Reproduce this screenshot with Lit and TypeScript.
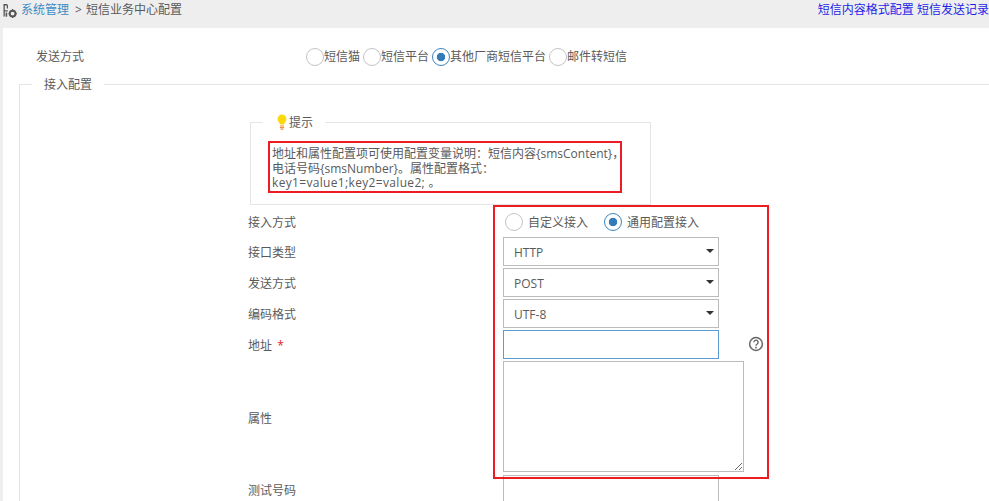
import { LitElement, html, css } from "lit";
import { customElement } from "lit/decorators.js";

@customElement("app-root")
export class AppRoot extends LitElement {
  static styles = css`
    :host {
      display: block;
      position: relative;
      width: 989px;
      height: 501px;
      overflow: hidden;
      background: #eee;
      font: 12px/17px "Open Sans", "Noto Sans CJK SC", sans-serif;
      color: #5a5a5a;
    }
    * { box-sizing: border-box; }
    .top {
      height: 28px;
      display: flex;
      justify-content: space-between;
      padding: 0 0 0 3px;
      line-height: 20px;
    }
    .crumb { display: flex; }
    .crumb svg { width: 14px; height: 15px; margin: 3px 4px 0 0; }
    .crumb a { color: #3b8cc4; }
    .crumb .sep { margin: 0 4px 0 6px; }
    .links { color: #1f1fe8; white-space: pre; }
    .body {
      margin-left: 3px;
      height: 473px;
      background: #fff;
      overflow: hidden;
      padding-top: 20px;
    }
    .send { display: flex; padding-left: 33px; height: 18px; line-height: 18px; }
    .send .lbl { width: 270px; }
    .radios { display: flex; gap: 3px; }
    .radio { display: flex; align-items: center; white-space: nowrap; }
    .dot {
      width: 18px;
      height: 18px;
      border-radius: 50%;
      border: 1px solid #c4c4c4;
      flex: none;
      background: #fff;
    }
    .dot.on {
      border: 1.5px solid #3d84bd;
      background: radial-gradient(circle, #337ab7 0, #337ab7 3.8px, #fff 4.6px);
    }
    fieldset { margin: 0; padding: 0; min-width: 0; border: 1px solid #e5e5e5; }
    .access {
      margin: 10px 0 0 16px;
      width: 1100px;
      height: 500px;
    }
    .access > legend { margin-left: 12px; padding: 0 12px; height: 17px; line-height: 17px; }
    .access-inner { padding: 21px 0 0 228px; }
    .hint {
      margin-left: 2px;
      width: 401px;
      height: 91px;
    }
    .hint legend {
      margin-left: 12px;
      padding: 0 12px;
      display: flex;
      align-items: flex-end;
      height: 17px;
      line-height: 17px;
    }
    .hint legend svg { width: 14px; height: 17px; display: block; }
    .hint p { margin: 0; padding: 16px 0 0 21px; line-height: 14.5px; white-space: nowrap; }
    .hint .kv { letter-spacing: 0.33px; }
    .form { margin-top: 3px; }
    .row { display: flex; margin-bottom: 2px; align-items: center; min-height: 29px; }
    .row.first { min-height: 27px; }
    .row .name { width: 255px; flex: none; padding-top: 2px; }
    .row .req { color: #e02222; margin-left: 2px; }
    .row.area { margin-bottom: 3px; }
    .row.area .name { padding-top: 3px; }
    .inner { display: flex; align-items: center; height: 27px; padding-top: 1px; }
    .inner .radio .dot { margin: 0 5px 0 2px; }
    .inner .radio + .radio { margin-left: 14px; }
    .select { position: relative; width: 216px; height: 29px; }
    select, input {
      display: block;
      width: 216px;
      height: 29px;
      border: 1px solid #bbb;
      border-radius: 0;
      background: #fff;
      color: #5a5a5a;
      font: inherit;
      padding: 2px 10px 0;
      outline: none;
      appearance: none;
    }
    .arrow {
      position: absolute;
      right: 5px;
      top: 12px;
      width: 0;
      height: 0;
      border-style: solid;
      border-width: 4px 4px 0 4px;
      border-color: #333 transparent transparent transparent;
    }
    input.active { border-color: #5b9bd1; }
    .addr { position: relative; }
    .help {
      position: absolute;
      left: 245px;
      top: 6px;
      width: 16px;
      height: 16px;
      display: block;
    }
    textarea {
      display: block;
      width: 241px;
      height: 111px;
      border: 1px solid #bbb;
      border-radius: 0;
      outline: none;
      resize: both;
      background: #fff;
      font: inherit;
    }
    .mark {
      position: absolute;
      border: 2px solid #ed1c24;
      pointer-events: none;
    }
    .mark.a { left: 268px; top: 141px; width: 354px; height: 52px; }
    .mark.b { left: 493px; top: 205px; width: 276px; height: 274px; }
  `;

  render() {
    return html`
      <div class="top">
        <div class="crumb">
          <svg viewBox="0 0 14 15" fill="#555">
            <path d="M0.5 1h3.4l1.1 1.2v3.3h-1.2V2.4H1.8v4.8h3v1.2H1.8v5.2H0.5z"/>
            <rect x="2.6" y="9.5" width="1.6" height="4.2"/>
            <circle cx="9.6" cy="10.6" r="2.9" fill="none" stroke="#555" stroke-width="2"/>
            <path d="M9 6h1.2v1.2H9zM9 14h1.2v1H9zM5.6 10h1.2v1.2H5.6zM12.6 10h1.2v1.2h-1.2z"/>
          </svg>
          <a>系统管理</a><span class="sep">&gt;</span><span>短信业务中心配置</span>
        </div>
        <div class="links"><a>短信内容格式配置</a> <a>短信发送记录</a></div>
      </div>
      <div class="body">
        <div class="send">
          <span class="lbl">发送方式</span>
          <div class="radios">
            <label class="radio"><span class="dot"></span>短信猫</label>
            <label class="radio"><span class="dot"></span>短信平台</label>
            <label class="radio"><span class="dot on"></span>其他厂商短信平台</label>
            <label class="radio"><span class="dot"></span>邮件转短信</label>
          </div>
        </div>
        <fieldset class="access">
          <legend>接入配置</legend>
          <div class="access-inner">
            <fieldset class="hint">
              <legend>
                <svg viewBox="0 0 14 17">
                  <path d="M7 0.5a4.4 4.4 0 0 0-4.4 4.4c0 1.8 1.2 2.9 1.8 4.1.3.6.4 1.1.4 1.6h4.4c0-.5.1-1 .4-1.6.6-1.2 1.8-2.3 1.8-4.1A4.4 4.4 0 0 0 7 .5z" fill="#fbd90c"/>
                  <path d="M4.9 11.4h4.2v1.1H4.9zM4.9 13.1h4.2v1.1H4.9zM5.7 14.8h2.6v1H5.7z" fill="#f0913a"/>
                </svg>
                <span>提示</span>
              </legend>
              <p>地址和属性配置项可使用配置变量说明：短信内容{smsContent}，<br />电话号码{smsNumber}。属性配置格式：<br /><span class="kv">key1=value1;key2=value2; 。</span></p>
            </fieldset>
            <div class="form">
              <div class="row first">
                <span class="name">接入方式</span>
                <div class="inner">
                  <label class="radio"><span class="dot"></span>自定义接入</label>
                  <label class="radio"><span class="dot on"></span>通用配置接入</label>
                </div>
              </div>
              <div class="row">
                <span class="name">接口类型</span>
                <div class="select"><select><option>HTTP</option></select><span class="arrow"></span></div>
              </div>
              <div class="row">
                <span class="name">发送方式</span>
                <div class="select"><select><option>POST</option></select><span class="arrow"></span></div>
              </div>
              <div class="row">
                <span class="name">编码格式</span>
                <div class="select"><select><option>UTF-8</option></select><span class="arrow"></span></div>
              </div>
              <div class="row">
                <span class="name">地址<span class="req"> *</span></span>
                <div class="addr">
                  <input class="active" type="text" />
                  <svg class="help" viewBox="0 0 16 16">
                    <circle cx="8" cy="8" r="6.4" fill="none" stroke="#666" stroke-width="1.5"/>
                    <path d="M5.9 6.3a2.1 2.1 0 1 1 3.3 1.7c-.8.5-1.2.9-1.2 1.7" fill="none" stroke="#666" stroke-width="1.4"/>
                    <rect x="7.2" y="10.8" width="1.6" height="1.6" fill="#666"/>
                  </svg>
                </div>
              </div>
              <div class="row area">
                <span class="name">属性</span>
                <textarea></textarea>
              </div>
              <div class="row">
                <span class="name">测试号码</span>
                <input type="text" />
              </div>
            </div>
          </div>
        </fieldset>
      </div>
      <div class="mark a"></div>
      <div class="mark b"></div>
    `;
  }
}
